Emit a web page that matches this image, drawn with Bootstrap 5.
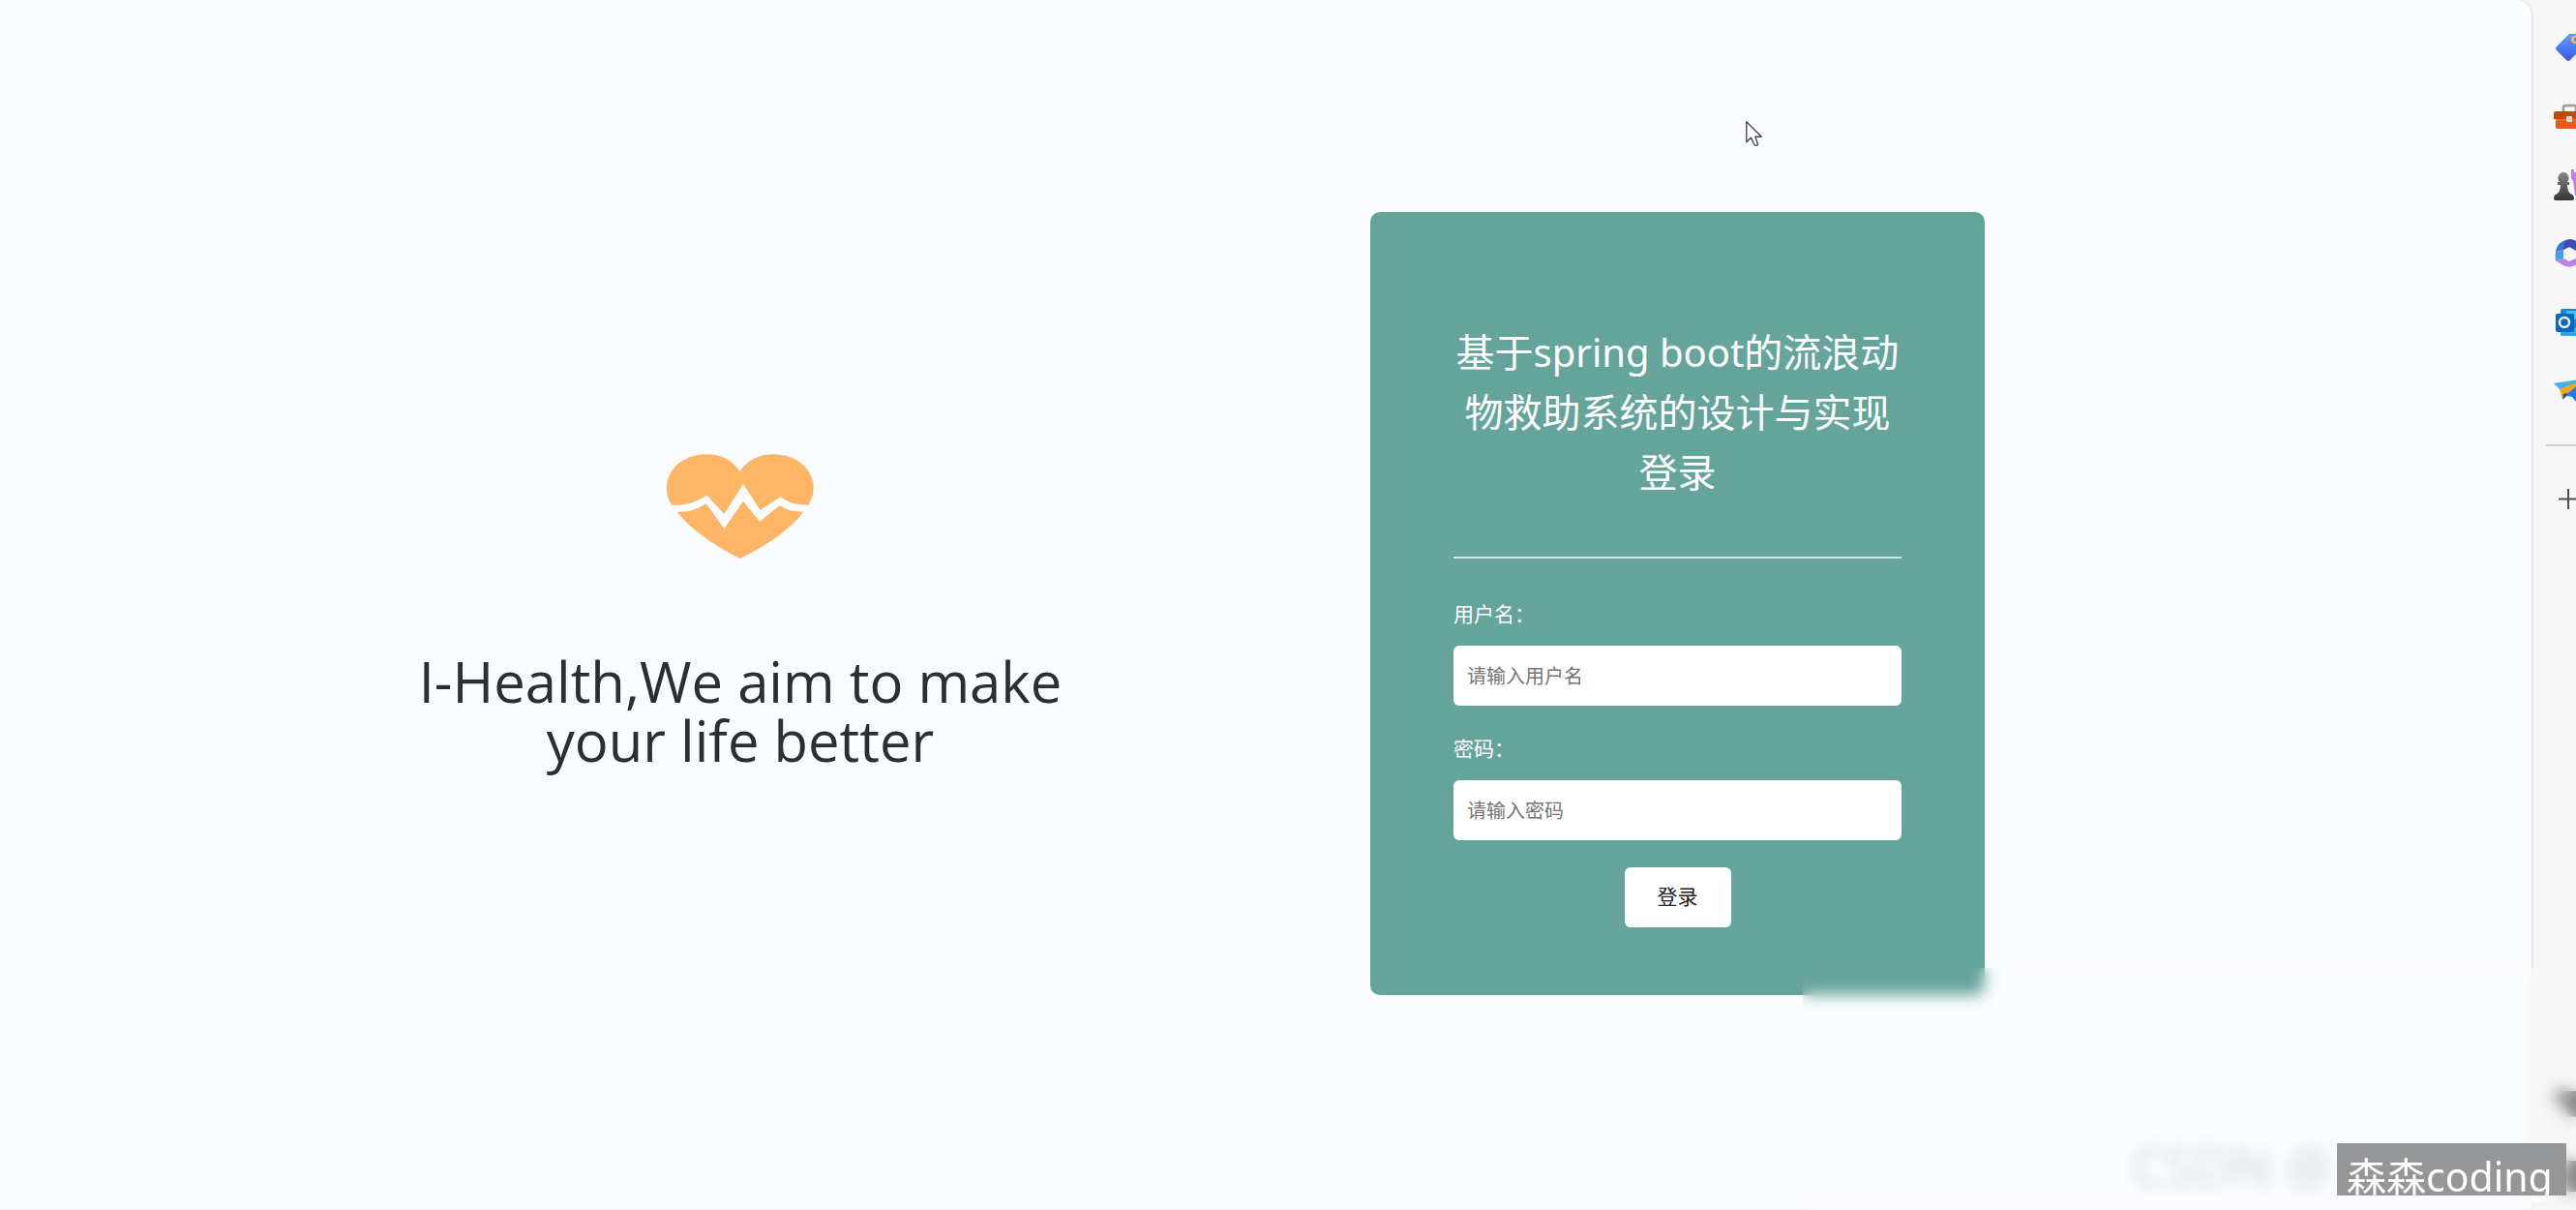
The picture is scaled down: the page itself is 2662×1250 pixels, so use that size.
<!DOCTYPE html>
<html lang="zh-CN">
<head>
<meta charset="utf-8">
<meta name="viewport" content="width=device-width, initial-scale=1">
<title>登录</title>
<link href="https://cdn.jsdelivr.net/npm/bootstrap@5.3.0/dist/css/bootstrap.min.css" rel="stylesheet">
<style>
  body { font-family: "Noto Sans", "Noto Sans CJK SC", sans-serif; background: #f7f7f7; color: #2b2f33; }
  .stage { background: #fbfcff; border-top-right-radius: 16px; border-bottom: 1px solid #ebebed; box-shadow: 1px 0 3px #dcdde0; padding: 0 0 2px 114px; min-width: 0; }
  .hero { flex: 0 1 1302px; padding-top: 16px; }
  .heart { width: 152px; height: 108px; margin-bottom: 96px; }
  .slogan { font-family: "Open Sans", "Noto Sans", sans-serif; font-size: 58px; line-height: 61px; max-width: 760px; font-weight: 400; }
  .login-panel { width: 635px; background: #65a49b; border-radius: 10px; padding: 114px 86px 70px; color: #fff; }
  .login-title { font-size: 40px; line-height: 62px; font-weight: 400; margin: 0 -3px 56px; }
  .rule { height: 2px; background: #cfe4e1; margin-bottom: 42px; }
  .field-label { font-size: 21px; line-height: 30px; margin-bottom: 18px; }
  .field { height: 62px; border: 0; border-radius: 6px; padding: 0 14px; font-size: 20px; background: #fff; }
  .field::placeholder { color: #757575; opacity: 1; }
  .gap-field { margin-bottom: 29px; }
  .gap-last { margin-bottom: 28px; }
  .enter { width: 110px; height: 62px; border: 0; border-radius: 6px; background: #fff; color: #222; font-size: 21px; }
  .rail { flex: 0 0 46px; padding: 33px 0 19px 23px; }
  .rail svg { flex: none; width: 32px; height: 32px; }
  .rail-icons { gap: 39px; }
  .rail-line { height: 2px; width: 60px; background: #cecece; margin: 39px 0; margin-left: -8px; flex: none; }
  .rail-foot { gap: 44px; }
  .pointer { left: 1802px; top: 123px; width: 22px; height: 31px; }
  .faint { right: 252px; bottom: 16px; font-size: 54px; line-height: 60px; color: #d4d5d7; }
  .frost { right: 0; bottom: 0; width: 799px; height: 250px; backdrop-filter: blur(8px); }
  .tag-name { right: 10px; bottom: 15px; width: 237px; height: 54px; background: #959698; color: #fff; font-size: 41px; line-height: 68px; padding-left: 10px; }
</style>
<script src="https://cdn.jsdelivr.net/npm/bootstrap@5.3.0/dist/js/bootstrap.bundle.min.js"></script>
</head>
<body class="position-relative d-flex min-vh-100 overflow-hidden">
<main class="stage d-flex flex-grow-1 align-items-center">
  <section class="hero d-flex flex-column align-items-center text-center">
    <svg class="heart" viewBox="88 54 456 324" fill="#ffb566" aria-hidden="true">
      <path d="M315 108C290 70 250 54 210 55C140 56 88 100 88 160C88 178 92 195 103 212C150 214 170 205 213 182L266 240L325 147L378 228L440 187C475 210 490 211 527 212C538 195 543 178 543 155C540 100 490 55 420 55C375 55 338 73 315 108Z"/>
      <path d="M120 234C160 234 175 228 210 208L266 286L325 200L376 263L438 214C460 228 480 233 512 233C470 290 400 335 315 378C230 335 160 285 120 234Z"/>
    </svg>
    <h1 class="slogan mb-0">I-Health,We aim to make your life better</h1>
  </section>
  <form class="login-panel">
    <h2 class="login-title text-center">基于spring boot的流浪动物救助系统的设计与实现登录</h2>
    <div class="rule"></div>
    <div class="gap-field">
      <label class="field-label d-block" for="user">用户名：</label>
      <input class="field form-control" id="user" type="text" placeholder="请输入用户名">
    </div>
    <div class="gap-last">
      <label class="field-label d-block" for="pass">密码：</label>
      <input class="field form-control" id="pass" type="password" placeholder="请输入密码">
    </div>
    <button class="enter d-block mx-auto" type="button">登录</button>
  </form>
</main>
<aside class="rail d-flex flex-column overflow-hidden">
  <div class="rail-icons d-flex flex-column">
    <svg viewBox="0 0 32 32"><defs><linearGradient id="gt" x1="0" y1="0" x2="0" y2="1"><stop offset="0" stop-color="#62a0ff"/><stop offset="1" stop-color="#3a56e8"/></linearGradient></defs><path d="M16 2h11q3 0 3 3v11L17 29q-2 2-4 0L3 19q-2-2 0-4z" fill="url(#gt)"/><circle cx="22" cy="8" r="4" fill="#e5c04d"/><circle cx="23" cy="8" r="2" fill="#587edc"/></svg>
    <svg viewBox="0 0 32 32"><path d="M10 11V7q0-2 2-2h9q2 0 2 2v4" fill="none" stroke="#9b9b9b" stroke-width="2.5"/><path d="M2 16h28v11q0 2-2 2H4q-2 0-2-2z" fill="#e55c1a"/><path d="M0 13q0-2 2-2h28q2 0 2 2v6H0z" fill="#c94509"/><path d="M2 19h28v2H2z" fill="#f06a22"/><rect x="13" y="16" width="6" height="6" rx="1" fill="#d6d6d6"/></svg>
    <svg viewBox="0 0 32 32"><defs><linearGradient id="gp" x1="0" y1="0" x2="0" y2="1"><stop offset="0" stop-color="#888"/><stop offset="1" stop-color="#333"/></linearGradient></defs><path d="M18 0h3v3h3V0h5v10l-2 3v14h-5l-2-15-2-3z" fill="#c67bed"/><path d="M10 3a6 6 0 0 1 4 10h2v3h-2q0 6 3 9 4 1 4 5 0 2-2 2H2q-2 0-2-2 0-4 4-5 3-3 3-9H4v-3h2a6 6 0 0 1 4-10" fill="url(#gp)"/></svg>
    <svg viewBox="0 0 32 32"><path d="M10 3q7-4 13 0l6 5v8l-7-4-6-3-6 3v9l-7 3q-2-3-1-9 0-8 8-12" fill="#3478d4"/><path d="M2 17q0 7 6 10 8 5 14 1l8-5V9l-7 4v8l-7 3-6-3v-9q-8 0-8 5" fill="#b284e5"/><path d="M10 12l6-3 7 4V3q-6-3-11 0z" fill="#4249b5"/><path d="M10 21v-9L2 16v5z" fill="#41a1ed"/></svg>
    <svg viewBox="0 0 32 32"><rect x="7" y="2" width="25" height="28" rx="2" fill="#1688d8"/><path d="M13 4h19v9H13z" fill="#45c1f5"/><path d="M7 22h25v8H9q-2 0-2-2z" fill="#28a8ea"/><rect x="2" y="7" width="19" height="19" rx="2" fill="#0868bf"/><ellipse cx="11" cy="16" rx="5" ry="5" fill="none" stroke="#e6f4ff" stroke-width="2.5"/></svg>
    <svg viewBox="0 0 32 32"><path d="M0 8L32 3 16 18 7 15z" fill="#42b3e8"/><path d="M6 14L32 4 15 19l-6 5z" fill="#f3a51b"/><path d="M9 25l6-7L32 4 27 28l-5-2-3-4-5-1z" fill="#2878ec"/><path d="M9 25l1-6 5-1z" fill="#164b9c"/></svg>
  </div>
  <div class="rail-line"></div>
  <svg viewBox="0 0 32 32"><path d="M15 5v21M5 15.500h21" stroke="#505050" stroke-width="2"/></svg>
  <div class="rail-foot d-flex flex-column mt-auto">
    <svg viewBox="0 0 32 32"><path d="M0 4l32 0v28L16 30 10 20 2 14z" fill="#888"/></svg>
    <svg viewBox="0 0 32 32"><path d="M8 0h24v32H8z" fill="#888"/></svg>
  </div>
</aside>
<svg class="pointer position-absolute" viewBox="0 0 24 34" aria-hidden="true"><path d="M3 3v23l5-5 4 8q2 2 4 0l-3-9h7z" fill="#fff" stroke="#44464d" stroke-width="1.500" stroke-linejoin="round"/></svg>
<div class="faint position-absolute">CSDN @</div>
<div class="frost position-absolute"></div>
<div class="tag-name position-absolute text-nowrap">森森coding</div>
</body>
</html>
